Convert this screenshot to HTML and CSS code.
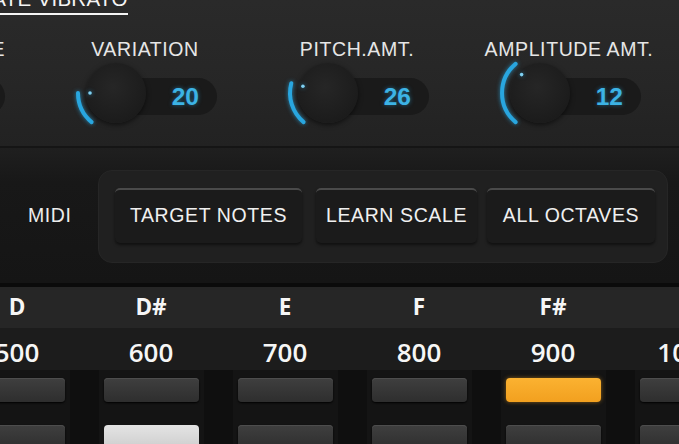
FILE: index.html
```html
<!DOCTYPE html>
<html>
<head>
<meta charset="utf-8">
<link rel="stylesheet" href="styles.css">
</head>
<body>
<div class="app">
  <section class="vibrato">
    <div class="title-row"><span class="title">CREATE VIBRATO</span></div>
    <div class="knobs">
      <div class="knob-group knob-group--edge">
        <div class="knob-label">RATE</div>
        <div class="knob-row">
          <div class="knob"></div>
          <div class="knob-value">5.5</div>
        </div>
      </div>
      <div class="knob-group">
        <div class="knob-label">VARIATION</div>
        <div class="knob-row">
          <div class="knob">
            <svg class="knob-arc" viewBox="0 0 100 100"><path d="M25.6 79.1 A38 38 0 0 1 12 50"/><circle cx="24" cy="50" r="1.8"/></svg>
          </div>
          <div class="knob-value">20</div>
        </div>
      </div>
      <div class="knob-group">
        <div class="knob-label">PITCH.AMT.</div>
        <div class="knob-row">
          <div class="knob">
            <svg class="knob-arc" viewBox="0 0 100 100"><path d="M25.6 79.1 A38 38 0 0 1 13.3 40.2"/><circle cx="24.9" cy="43.3" r="1.8"/></svg>
          </div>
          <div class="knob-value">26</div>
        </div>
      </div>
      <div class="knob-group">
        <div class="knob-label">AMPLITUDE AMT.</div>
        <div class="knob-row">
          <div class="knob">
            <svg class="knob-arc" viewBox="0 0 100 100"><path d="M25.6 79.1 A38 38 0 0 1 25.6 20.9"/><circle cx="31.6" cy="31.6" r="1.8"/></svg>
          </div>
          <div class="knob-value">12</div>
        </div>
      </div>
    </div>
  </section>

  <section class="midi">
    <div class="midi-label">MIDI</div>
    <div class="midi-panel">
      <div class="mbtn mbtn--target">TARGET NOTES</div>
      <div class="mbtn mbtn--learn">LEARN SCALE</div>
      <div class="mbtn mbtn--octaves">ALL OCTAVES</div>
    </div>
  </section>

  <section class="notes">
    <div class="note-row">
      <div class="cell">D</div><div class="cell">D#</div><div class="cell">E</div><div class="cell">F</div><div class="cell">F#</div><div class="cell">G</div>
    </div>
    <div class="cent-row">
      <div class="cell">500</div><div class="cell">600</div><div class="cell">700</div><div class="cell">800</div><div class="cell">900</div><div class="cell">1000</div>
    </div>
    <div class="pad-row">
      <div class="pad-col"><div class="band"><div class="pad"></div><div class="pad"></div></div></div>
      <div class="pad-col"><div class="band"><div class="pad"></div><div class="pad pad--lit"></div></div></div>
      <div class="pad-col"><div class="band"><div class="pad"></div><div class="pad"></div></div></div>
      <div class="pad-col"><div class="band"><div class="pad"></div><div class="pad"></div></div></div>
      <div class="pad-col"><div class="band"><div class="pad pad--on"></div><div class="pad"></div></div></div>
      <div class="pad-col"><div class="band"><div class="pad"></div><div class="pad"></div></div></div>
    </div>
  </section>
</div>
</body>
</html>
```
FILE: styles.css
```css
* { box-sizing: border-box; margin: 0; padding: 0; }
html, body { width: 679px; height: 444px; overflow: hidden; background: #101010; }
body { font-family: "Liberation Sans", Arial, sans-serif; }
.app { width: 679px; height: 444px; overflow: hidden; }

/* ---- vibrato knobs ---- */
.vibrato {
  height: 148px;
  background: linear-gradient(#2a2a2a, #262626 60%, #222222);
  border-bottom: 2px solid #151515;
  overflow: hidden;
}
.title-row { margin-top: -11px; height: 26px; white-space: nowrap; }
.title {
  display: inline-block;
  margin-left: -52px;
  font-size: 20.5px;
  line-height: 20px;
  color: #f4f4f4;
  letter-spacing: 0.3px;
  padding-bottom: 4px;
  border-bottom: 2px solid #f4f4f4;
}
.knobs { display: flex; margin-left: -173px; margin-top: 24px; }
.knob-group {
  width: 212px;
  flex: none;
  display: flex;
  flex-direction: column;
  align-items: center;
}
.knob-label {
  font-size: 19.5px;
  line-height: 20px;
  height: 20px;
  color: #e6e6e6;
  letter-spacing: 0.6px;
  white-space: nowrap;
}
.knob-group--edge .knob-label { align-self: flex-end; padding-right: 34px; }
.knob-row { align-self: stretch; display: flex; padding-left: 47px; margin-top: 4px; }
.knob {
  position: relative;
  z-index: 1;
  flex: none;
  width: 60px;
  height: 60px;
  border-radius: 50%;
  background: radial-gradient(circle at 45% 40%, #262626 0%, #1e1e1e 55%, #171717 100%);
  box-shadow: 0 2px 5px rgba(0, 0, 0, 0.55);
}
.knob-arc {
  position: absolute;
  left: -20px;
  top: -20px;
  width: 100px;
  height: 100px;
  overflow: visible;
  filter: drop-shadow(0 0 2px rgba(40, 170, 230, 0.7));
}
.knob-arc path { fill: none; stroke: #29a6df; stroke-width: 4; stroke-linecap: round; }
.knob-arc circle { fill: #7fd0f2; }
.knob-value {
  flex: none;
  margin-left: -30px;
  margin-top: 15px;
  width: 101px;
  height: 37px;
  border-radius: 0 19px 19px 0;
  background: #1a1a1a;
  display: flex;
  align-items: center;
  justify-content: flex-end;
  padding-right: 18px;
  font-weight: bold;
  font-size: 24.5px;
  color: #3cb3e5;
  text-shadow: 0 0 4px rgba(40, 160, 220, 0.55);
}

/* ---- MIDI ---- */
.midi {
  height: 135px;
  display: flex;
  align-items: center;
  padding-left: 28px;
  background: linear-gradient(#1f1f1f, #181818 25%, #151515);
}
.midi-label {
  width: 70px;
  flex: none;
  font-size: 19.5px;
  color: #ececec;
  letter-spacing: 0.6px;
  margin-top: -1px;
}
.midi-panel {
  display: flex;
  width: 570px;
  height: 93px;
  margin-top: 2px;
  padding: 17px 12px 19px 16px;
  background: #202020;
  border: 1px solid #262626;
  border-radius: 14px;
}
.mbtn {
  height: 55px;
  flex: none;
  border-radius: 5px;
  background: #1b1b1b;
  border-top: 2px solid #4a4a4a;
  box-shadow: 0 2px 3px rgba(0, 0, 0, 0.5);
  color: #f0f0f0;
  font-size: 19.5px;
  letter-spacing: 0.6px;
  display: flex;
  align-items: center;
  justify-content: center;
  padding-bottom: 2px;
}
.mbtn--target { width: 187px; margin-right: 14px; }
.mbtn--learn { width: 161px; margin-right: 10px; }
.mbtn--octaves { width: 168px; }

/* ---- notes ---- */
.notes { border-top: 4px solid #0b0b0b; }
.note-row, .cent-row, .pad-row {
  display: grid;
  grid-template-columns: repeat(6, 134px);
  margin-left: -50px;
}
.cell { text-align: center; font-family: "Open Sans", "Liberation Sans", sans-serif; font-weight: 600; color: #f6f6f6; }
.note-row { height: 41px; background: #262626; }
.note-row .cell { font-size: 22.5px; line-height: 40px; font-weight: 700; }
.cent-row { height: 42px; background: #1c1c1c; }
.cent-row .cell { font-size: 26px; line-height: 36px; padding-top: 6px; }
.pad-row { height: 80px; background: #0f0f0f; }
.band {
  width: 105px;
  height: 80px;
  margin: 0 auto;
  padding-top: 8px;
  background: #141414;
}
.pad {
  width: 95px;
  height: 24px;
  margin: 0 auto 23px;
  border-radius: 4px;
  background: linear-gradient(#3f3f3f, #2e2e2e);
  box-shadow: inset 0 1px 0 #4d4d4d, 0 1px 2px #000;
}
.pad--on {
  background: linear-gradient(#fbb231, #f2a01f);
  box-shadow: 0 0 4px rgba(245, 165, 35, 0.5);
}
.pad--lit { background: linear-gradient(#e4e4e4, #cdcdcd); box-shadow: none; }
```
